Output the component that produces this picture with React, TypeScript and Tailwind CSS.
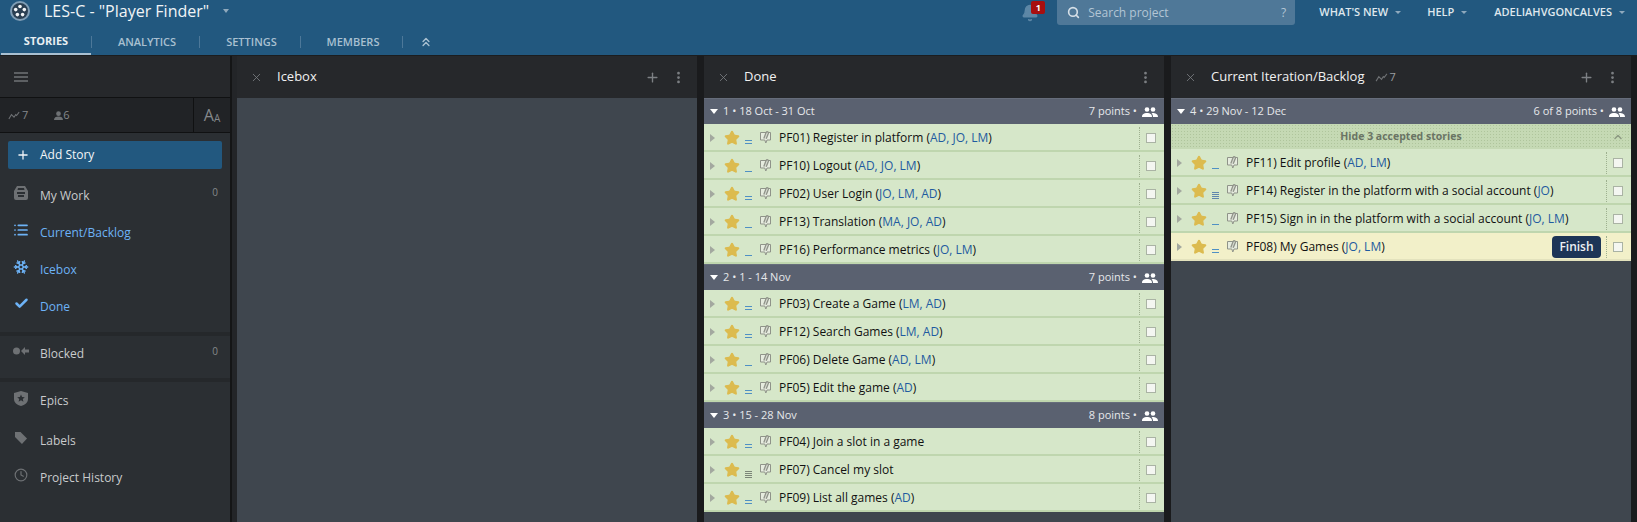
import { Bell, Check, ChevronDown, ChevronsUp, Clock, List, MoreVertical, Plus, Search, Snowflake, Star, X } from "lucide-react";

const font = "font-['Open_Sans',sans-serif]";

type Story = { id: string; title: string; who?: string; est: number; grey?: boolean; state?: "done" | "started" };

const done: { head: string; pts: string; stories: Story[] }[] = [
  {
    head: "1 • 18 Oct - 31 Oct",
    pts: "7 points",
    stories: [
      { id: "PF01", title: "Register in platform", who: "AD, JO, LM", est: 2 },
      { id: "PF10", title: "Logout", who: "AD, JO, LM", est: 1 },
      { id: "PF02", title: "User Login", who: "JO, LM, AD", est: 2 },
      { id: "PF13", title: "Translation", who: "MA, JO, AD", est: 1 },
      { id: "PF16", title: "Performance metrics", who: "JO, LM", est: 1 },
    ],
  },
  {
    head: "2 • 1 - 14 Nov",
    pts: "7 points",
    stories: [
      { id: "PF03", title: "Create a Game", who: "LM, AD", est: 2 },
      { id: "PF12", title: "Search Games", who: "LM, AD", est: 2 },
      { id: "PF06", title: "Delete Game", who: "AD, LM", est: 1 },
      { id: "PF05", title: "Edit the game", who: "AD", est: 2 },
    ],
  },
  {
    head: "3 • 15 - 28 Nov",
    pts: "8 points",
    stories: [
      { id: "PF04", title: "Join a slot in a game", est: 2 },
      { id: "PF07", title: "Cancel my slot", est: 4, grey: true },
      { id: "PF09", title: "List all games", who: "AD", est: 2 },
    ],
  },
];

const current: Story[] = [
  { id: "PF11", title: "Edit profile", who: "AD, LM", est: 1 },
  { id: "PF14", title: "Register in the platform with a social account", who: "JO", est: 4 },
  { id: "PF15", title: "Sign in in the platform with a social account", who: "JO, LM", est: 1 },
  { id: "PF08", title: "My Games", who: "JO, LM", est: 2, state: "started" },
];

function Velocity({ className }: { className?: string }) {
  return (
    <svg viewBox="0 0 14 10" className={className} fill="none" stroke="currentColor" strokeWidth="1.2">
      <path d="M1 9l3-5 3 3 2-3 1 1 3-4" />
    </svg>
  );
}

function People() {
  return (
    <svg viewBox="0 0 16 10" className="w-4 h-[10px] text-white" fill="currentColor">
      <circle cx="5" cy="2.5" r="2.3" />
      <circle cx="11" cy="2.5" r="2.3" />
      <path d="M0 10c0-3 2-4 5-4s5 1 5 4zM10.500 6c3 0 5.500 1 5.500 4h-5c0-1.500-.5-3-1.500-3.800z" />
    </svg>
  );
}

// speech bubble with a paperclip over it
function Comment() {
  return (
    <svg viewBox="0 0 13 14" className="w-[13px] h-[14px] text-[#8f9389]" fill="none" stroke="currentColor" strokeWidth="1">
      <path d="M1.500 2.500h10a1 1 0 0 1 0 0v7.500h-3.500l-1.200 3-1-3H1.500z" fill="#e6ecdf" />
      <path d="M4.800 8.500l2.400-6.200a1.200 1.200 0 0 1 2.200.9L7.200 8.800" fill="#d9ddd3" strokeWidth="1.300" />
    </svg>
  );
}

function Estimate({ n, grey }: { n: number; grey?: boolean }) {
  return (
    <span className={`w-[7px] flex flex-col justify-end ${n === 4 ? "gap-px h-[8px]" : "gap-[2px] h-[5px]"}`}>
      {Array.from({ length: n }).map((_, i) => (
        <span key={i} className={`h-px w-[7px] ${grey ? "bg-[#7c8578]" : n === 4 ? "bg-[#5f86ad]" : "bg-[#4f90c4]"}`} />
      ))}
    </span>
  );
}

function StoryRow({ s }: { s: Story }) {
  const started = s.state === "started";
  return (
    <div className={`h-[28px] flex items-center pl-[6px] pr-[8px] pt-px border-b-2 ${started ? "bg-[#f2f0c9] border-[#e3e2bd]" : "bg-[#d6e7c9] border-[#bfd6ae]"}`}>
      <span className="w-0 h-0 border-y-[4px] border-y-transparent border-l-[5px] border-l-[#a3a89f] mr-[9px]" />
      <Star size={16} className="text-[#dcbb4f] fill-[#dcbb4f] mr-[5px] shrink-0" />
      <span className="mr-[7px] flex mt-[8px]"><Estimate n={s.est} grey={s.grey} /></span>
      <span className="mr-[7px] -mt-[2px] flex"><Comment /></span>
      <span className="text-[12px] text-[#111] whitespace-nowrap">
        {s.id}) {s.title}
        {s.who && (
          <>
            {" ("}
            <span className="text-[#1f5ba0]">{s.who}</span>
            {")"}
          </>
        )}
      </span>
      <span className="flex-1" />
      {started && (
        <span className="w-[49px] h-[22px] mr-[5px] rounded-[4px] bg-[#1d3557] text-[#eef1f4] text-[12px] font-semibold flex items-center justify-center">Finish</span>
      )}
      <span className="h-[22px] border-l border-dotted border-[#9eb08f]" />
      <span className="ml-[6px] w-[10px] h-[10px] bg-[#f4f6f1] border border-[#aab3a4]" />
    </div>
  );
}

function IterationHead({ head, pts }: { head: string; pts: string }) {
  return (
    <div className="h-[26px] flex items-center px-[6px] bg-[#5a6170] border-t border-[#666d7b] text-[11px] text-[#e6e8eb]">
      <span className="w-0 h-0 border-x-[4.5px] border-x-transparent border-t-[5px] border-t-white mr-[5px]" />
      <span>{head}</span>
      <span className="flex-1" />
      <span>{pts} •</span>
      <span className="ml-[5px] flex"><People /></span>
    </div>
  );
}

function PanelHead({ title, add, children }: { title: string; add?: boolean; children?: React.ReactNode }) {
  return (
    <div className="h-[42px] shrink-0 flex items-center pl-[13px] pr-[11px] bg-[#26282b] text-[#7d8084]">
      <X size={13} strokeWidth={1.5} className="mr-[14px]" />
      <span className="text-[13px] text-[#f1f1f1]">{title}</span>
      {children}
      <span className="flex-1" />
      {add && <Plus size={15} strokeWidth={2.2} className="mr-[11px]" />}
      <MoreVertical size={15} strokeWidth={2.4} />
    </div>
  );
}

function NavItem({ icon, label, count, blue, h = "h-[37px]" }: { icon: React.ReactNode; label: string; count?: string; blue?: boolean; h?: string }) {
  return (
    <div className={`${h} flex items-center pl-[13px] pr-[12px] text-[12px] ${blue ? "text-[#6db3f7]" : "text-[#c9cbcc]"}`}>
      <span className={`w-[16px] flex justify-center mr-[11px] -mt-[6px] ${blue ? "text-[#6db3f7]" : "text-[#6e7174]"}`}>{icon}</span>
      <span>{label}</span>
      <span className="flex-1" />
      {count && <span className="text-[10px] text-[#85888b] -mt-[6px]">{count}</span>}
    </div>
  );
}

function Sidebar() {
  return (
    <aside className="w-[230px] shrink-0 bg-[#2b2f33] flex flex-col">
      <div className="h-[41px] flex flex-col justify-center gap-[2px] pl-[14px] bg-[#26282b]">
        <span className="w-[14px] h-[2px] bg-[#5d6063]" />
        <span className="w-[14px] h-[2px] bg-[#5d6063]" />
        <span className="w-[14px] h-[2px] bg-[#5d6063]" />
      </div>
      <div className="h-[36px] flex items-center bg-[#212326] border-y border-[#101112] text-[11px] text-[#85888b]">
        <span className="flex-1 flex items-center pl-[8px]">
          <Velocity className="w-[12px] h-[9px] text-[#6e7174] mr-[2px]" />
          <span>7</span>
          <svg viewBox="0 0 10 10" className="ml-[26px] w-[9px] h-[9px] text-[#6e7174]" fill="currentColor">
            <circle cx="5" cy="3" r="2.600" />
            <path d="M0 10c0-3 2-4 5-4s5 1 5 4z" />
          </svg>
          <span>6</span>
        </span>
        <span className="w-[37px] h-full border-l border-[#101112] flex items-end justify-center pb-[9px] text-[#85888b]">
          <span className="text-[16px] leading-none">A</span>
          <span className="text-[10px] leading-none">A</span>
        </span>
      </div>
      <div className="mx-[8px] mt-[8px] mb-[8px] h-[28px] rounded-[2px] bg-[#22587f] flex items-center pl-[8px] text-[12px] text-[#f3f5f7]">
        <Plus size={14} strokeWidth={2.2} className="mr-[10px]" />
        Add Story
      </div>
      <NavItem
        label="My Work"
        count="0"
        icon={
          <svg viewBox="0 0 14 14" className="w-[14px] h-[14px]" fill="currentColor">
            <path d="M3 0h8l3 5v7a2 2 0 0 1-2 2H2a2 2 0 0 1-2-2V5zM4 2l-.500 2h7L10 2zM3 6v2h8V6zM4 9v2h6V9z" fillRule="evenodd" />
          </svg>
        }
      />
      <NavItem blue label="Current/Backlog" icon={<List size={16} strokeWidth={2.6} />} />
      <NavItem blue label="Icebox" icon={<Snowflake size={16} strokeWidth={2.2} />} />
      <NavItem blue label="Done" icon={<Check size={15} strokeWidth={4} />} />
      <div className="mt-[7px] h-[4px] bg-[#25282b]" />
      <NavItem
        h="h-[36px]"
        label="Blocked"
        count="0"
        icon={
          <svg viewBox="0 0 16 8" className="w-[16px] h-[8px]" fill="currentColor">
            <circle cx="3.500" cy="4" r="3.500" />
            <path d="M8 4l4-4v2.500h4v3h-4V8z" />
          </svg>
        }
      />
      <div className="mt-[6px] h-[4px] bg-[#25282b]" />
      <NavItem
        h="h-[38px]"
        label="Epics"
        icon={
          <svg viewBox="0 0 14 15" className="w-[14px] h-[15px]" fill="currentColor">
            <path fillRule="evenodd" d="M7 0l7 2v6c0 3.500-3 6-7 7-4-1-7-3.500-7-7V2zM7 3.500l1.100 2.500 2.700.2-2 1.800.6 2.700L7 9.300l-2.400 1.400.6-2.700-2-1.800 2.700-.2z" />
          </svg>
        }
      />
      <div className="mt-[2px]">
        <NavItem
          label="Labels"
          icon={
            <svg viewBox="0 0 13 13" className="w-[12px] h-[12px]" fill="currentColor">
              <path d="M0 0h6l7 7-5.500 6L0 5.500z" />
            </svg>
          }
        />
      </div>
      <NavItem label="Project History" icon={<Clock size={14} strokeWidth={2} />} />
    </aside>
  );
}

function Caret() {
  return <span className="ml-[7px] w-0 h-0 border-x-[3px] border-x-transparent border-t-[3.500px] border-t-[#8fa9bd]" />;
}

function Tab({ label, w }: { label: string; w: string }) {
  return (
    <>
      <span className="self-center h-[12px] border-l border-[#4d7899]" />
      <span className={`${w} pl-[3px] flex items-center justify-center`}>{label}</span>
    </>
  );
}

function Logo() {
  return (
    <svg viewBox="0 0 20 20" className="ml-[10px] w-[20px] h-[20px] shrink-0">
      <circle cx="10" cy="10" r="9" fill="#2a3f52" stroke="#7f9db5" strokeWidth="2" />
      <g fill="#f2f5f7">
        <circle cx="10" cy="5.500" r="1.800" />
        <circle cx="14.300" cy="8.600" r="1.800" />
        <circle cx="12.600" cy="13.600" r="1.800" />
        <circle cx="7.400" cy="13.600" r="1.800" />
        <circle cx="5.700" cy="8.600" r="1.800" />
      </g>
      <circle cx="10" cy="10" r="1.200" fill="#2a3f52" />
    </svg>
  );
}

function Header() {
  return (
    <header className="h-[56px] shrink-0 bg-[#22587f] border-b border-[#1b1d1f] flex flex-col">
      <div className="h-[22px] flex items-center text-white">
        <Logo />
        <span className="ml-[14px] text-[16px] text-[#f1f4f6]">LES-C - "Player Finder"</span>
        <span className="ml-[14px] w-0 h-0 border-x-[3.500px] border-x-transparent border-t-[4px] border-t-[#8fa9bd]" />
        <span className="flex-1" />
        <span className="relative self-start mt-[4px] mr-[18px] text-[#5d87a6]">
          <Bell size={18} className="fill-[#5d87a6]" />
          <span className="absolute -top-[3px] left-[10px] w-[14px] h-[13px] rounded-[2px] bg-[#a80f0f] text-white text-[9px] font-bold flex items-center justify-center">1</span>
        </span>
        <div className="self-start w-[238px] h-[25px] shrink-0 rounded-b-[3px] bg-[#4f7898] flex items-center pl-[10px] pr-[9px] text-[12px] text-[#b3c6d5]">
          <Search size={13} strokeWidth={3} className="mr-[8px] text-[#d6e0e8]" />
          Search project
          <span className="flex-1" />
          ?
        </div>
        <div className="self-start h-[25px] flex items-center text-[11px] font-semibold text-[#dfe7ed]">
          <span className="ml-[24px]">WHAT'S NEW</span>
          <Caret />
          <span className="ml-[26px]">HELP</span>
          <Caret />
          <span className="ml-[27px]">ADELIAHVGONCALVES</span>
          <Caret />
          <span className="w-[12px]" />
        </div>
      </div>
      <nav className="flex-1 flex items-stretch pt-[7px] text-[11px] font-semibold text-[#a9c0d1]">
        <span className="w-[90px] ml-px flex items-center justify-center font-bold text-[#e9eff3] border-b-[2px] border-[#a9c0d1]">STORIES</span>
        <Tab label="ANALYTICS" w="w-[107px]" />
        <Tab label="SETTINGS" w="w-[100px]" />
        <Tab label="MEMBERS" w="w-[101px]" />
        <span className="self-center h-[12px] border-l border-[#4d7899]" />
        <span className="pl-[16px] flex items-center">
          <ChevronsUp size={14} strokeWidth={2.4} />
        </span>
      </nav>
    </header>
  );
}

export default function App() {
  return (
    <div className={`${font} w-[1637px] h-[522px] overflow-hidden flex flex-col bg-[#111]`}>
      <Header />
      <main className="flex-1 flex min-h-0">
        <Sidebar />
        <div className="w-[2px] bg-[#141516]" />
        <div className="w-[5px] bg-[#232528]" />
        <section className="w-[460px] flex flex-col bg-[#3f464e]">
          <PanelHead title="Icebox" add />
        </section>
        <div className="w-[7px] bg-[#1a1b1d]" />
        <section className="w-[460px] flex flex-col bg-[#3f464e]">
          <PanelHead title="Done" />
          {done.map((it) => (
            <div key={it.head}>
              <IterationHead head={it.head} pts={it.pts} />
              {it.stories.map((s) => (
                <StoryRow key={s.id} s={s} />
              ))}
            </div>
          ))}
        </section>
        <div className="w-[7px] bg-[#1a1b1d]" />
        <section className="w-[460px] flex flex-col bg-[#3f464e]">
          <PanelHead title="Current Iteration/Backlog" add>
            <Velocity className="ml-[10px] w-[13px] h-[9px] text-[#6e7174] mr-[2px]" />
            <span className="text-[11px] text-[#9a9da0]">7</span>
          </PanelHead>
          <IterationHead head="4 • 29 Nov - 12 Dec" pts="6 of 8 points" />
          <div className="h-[25px] flex items-center justify-center relative bg-[#c5d9b4] bg-[radial-gradient(#afc59c_1px,transparent_1px)] bg-[size:3px_3px] text-[10.500px] font-bold text-[#6a7464]">
            Hide 3 accepted stories
            <ChevronDown size={12} strokeWidth={3} className="absolute right-[7px] rotate-180 text-[#8d9a83]" />
          </div>
          {current.map((s) => (
            <StoryRow key={s.id} s={s} />
          ))}
        </section>
        <div className="flex-1 bg-[#1a1b1d]" />
      </main>
    </div>
  );
}
